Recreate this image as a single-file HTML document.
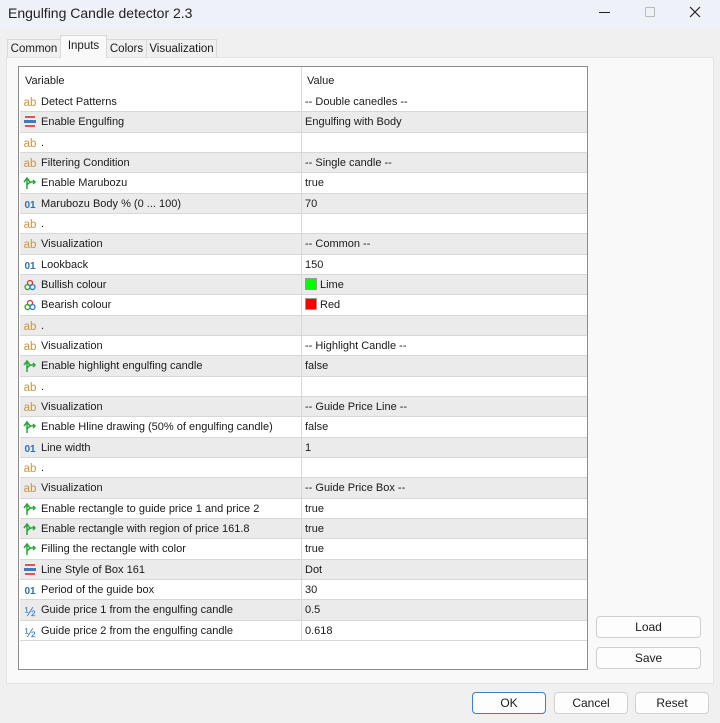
<!DOCTYPE html>
<html><head><meta charset="utf-8"><style>
*{box-sizing:border-box;margin:0;padding:0}
body{width:720px;height:723px;background:#f0f0f0;font-family:"Liberation Sans",sans-serif;font-size:11px;color:#1a1a1a;position:relative;overflow:hidden}
.a{position:absolute}
.title{left:0;top:0;width:720px;height:28px;background:#eef1f8}
.tab{position:absolute;border:1px solid #d9d9d9;border-bottom:none;background:#f0f0f0;text-align:center;line-height:19px;font-size:11.5px}
.panel{left:6px;top:57px;width:708px;height:627px;background:#f9f9f9;border:1px solid #e3e3e3}
.grid{left:18px;top:66px;width:570px;height:604px;background:#fff;border:1px solid #8c8c8c}
.row{position:absolute;left:1px;width:567px;height:20.33px;border-bottom:1px solid #d7d7d7;line-height:21px}
.g{background:#ebebeb}
.v{position:absolute;left:21px}
.w{position:absolute;left:285px}
.ic{position:absolute;left:3px;top:1px;width:14px;font-size:11px;text-align:center}
.ab{color:#c9963b;font-size:11.5px}
.n{color:#2f6fb0;font-size:10px;font-weight:bold}
.sep{position:absolute;left:282px;top:0;width:1px;height:100%;background:#d7d7d7}
.btn{position:absolute;background:#fdfdfd;border:1px solid #d0d0d0;border-radius:4px;text-align:center;line-height:20px;font-size:12px}
.sw{display:inline-block;width:12px;height:12px;vertical-align:-2px;margin-right:3px;border:1px solid #999}
</style></head><body>
<div class="a title"></div>
<div class="a" style="left:8px;top:5px;font-size:14px;color:#222">Engulfing Candle detector 2.3</div>
<div class="a" style="left:599px;top:12px;width:11px;height:1px;background:#222"></div>
<div class="a" style="left:645px;top:7px;width:10px;height:10px;border:1px solid #bbb;border-radius:1px"></div>
<svg class="a" style="left:689px;top:6px" width="12" height="12"><path d="M1 1L11 11M11 1L1 11" stroke="#222" stroke-width="1.2"/></svg>
<div class="a panel"></div>
<div class="tab" style="left:7px;top:39px;width:54px;height:18px">Common</div>
<div class="tab" style="left:60px;top:35px;width:47px;height:23px;background:#f9f9f9;line-height:21px">Inputs</div>
<div class="tab" style="left:106px;top:39px;width:41px;height:18px">Colors</div>
<div class="tab" style="left:146px;top:39px;width:71px;height:18px">Visualization</div>
<div class="a grid">
<div class="sep" style="height:25px"></div>
<div class="a" style="left:6px;top:8px">Variable</div>
<div class="a" style="left:288px;top:8px">Value</div>
<div id="rows"></div>
</div>
<div class="btn" style="left:596px;top:616px;width:105px;height:22px">Load</div>
<div class="btn" style="left:596px;top:647px;width:105px;height:22px">Save</div>
<div class="btn" style="left:472px;top:692px;width:74px;height:22px;border-color:#3c7fc4">OK</div>
<div class="btn" style="left:554px;top:692px;width:74px;height:22px">Cancel</div>
<div class="btn" style="left:635px;top:692px;width:74px;height:22px">Reset</div>
<script>
var R=[["ab","Detect Patterns","-- Double canedles --"],["en","Enable Engulfing","Engulfing with Body"],["ab",".",""],["ab","Filtering Condition","-- Single candle --"],["bo","Enable Marubozu","true"],["n","Marubozu Body % (0 ... 100)","70"],["ab",".",""],["ab","Visualization","-- Common --"],["n","Lookback","150"],["c","Bullish colour","L"],["c","Bearish colour","R"],["ab",".",""],["ab","Visualization","-- Highlight Candle --"],["bo","Enable highlight engulfing candle","false"],["ab",".",""],["ab","Visualization","-- Guide Price Line --"],["bo","Enable Hline drawing (50% of engulfing candle)","false"],["n","Line width","1"],["ab",".",""],["ab","Visualization","-- Guide Price Box --"],["bo","Enable rectangle to guide price 1 and price 2","true"],["bo","Enable rectangle with region of price 161.8","true"],["bo","Filling the rectangle with color","true"],["en","Line Style of Box 161","Dot"],["n","Period of the guide box","30"],["h","Guide price 1 from the engulfing candle","0.5"],["h","Guide price 2 from the engulfing candle","0.618"]];
var s="";
R.forEach(function(r,i){
var ic="";
if(r[0]=="ab")ic='<span class="ic ab">ab</span>';
else if(r[0]=="n")ic='<span class="ic n">01</span>';
else if(r[0]=="h")ic='<span class="ic" style="color:#2f6fb0;font-size:13px">½</span>';
else if(r[0]=="bo")ic='<svg class="ic" style="top:3px" width="14" height="14"><path d="M4 13V3M1 6L4 2L7 6M4 9Q7 5 12 6M10 4L12 6L10 8" stroke="#2aa53a" stroke-width="1.5" fill="none"/></svg>';
else if(r[0]=="en")ic='<svg class="ic" style="top:3px" width="14" height="14"><rect x="2" y="1" width="10" height="2" fill="#d55"/><rect x="1" y="5" width="12" height="3" fill="#3a7cc8"/><rect x="2" y="10" width="10" height="2" fill="#d55"/></svg>';
else ic='<svg class="ic" style="top:4px" width="14" height="12"><circle cx="7" cy="4" r="2.5" fill="none" stroke="#d33" stroke-width="1.3"/><circle cx="4.5" cy="8" r="2.5" fill="none" stroke="#2a2" stroke-width="1.3"/><circle cx="9.5" cy="8" r="2.5" fill="none" stroke="#37c" stroke-width="1.3"/></svg>';
var val=r[2];
if(val=="L")val='<span class="sw" style="background:#00ff00"></span>Lime';
if(val=="R")val='<span class="sw" style="background:#ff0000"></span>Red';
s+='<div class="row'+(i%2?' g':'')+'" style="top:'+(25+i*20.33)+'px">'+ic+'<span class="v">'+r[1]+'</span><span class="w">'+val+'</span><div class="sep" style="left:281px"></div></div>';
});
document.getElementById('rows').innerHTML=s;
</script>
</body></html>
